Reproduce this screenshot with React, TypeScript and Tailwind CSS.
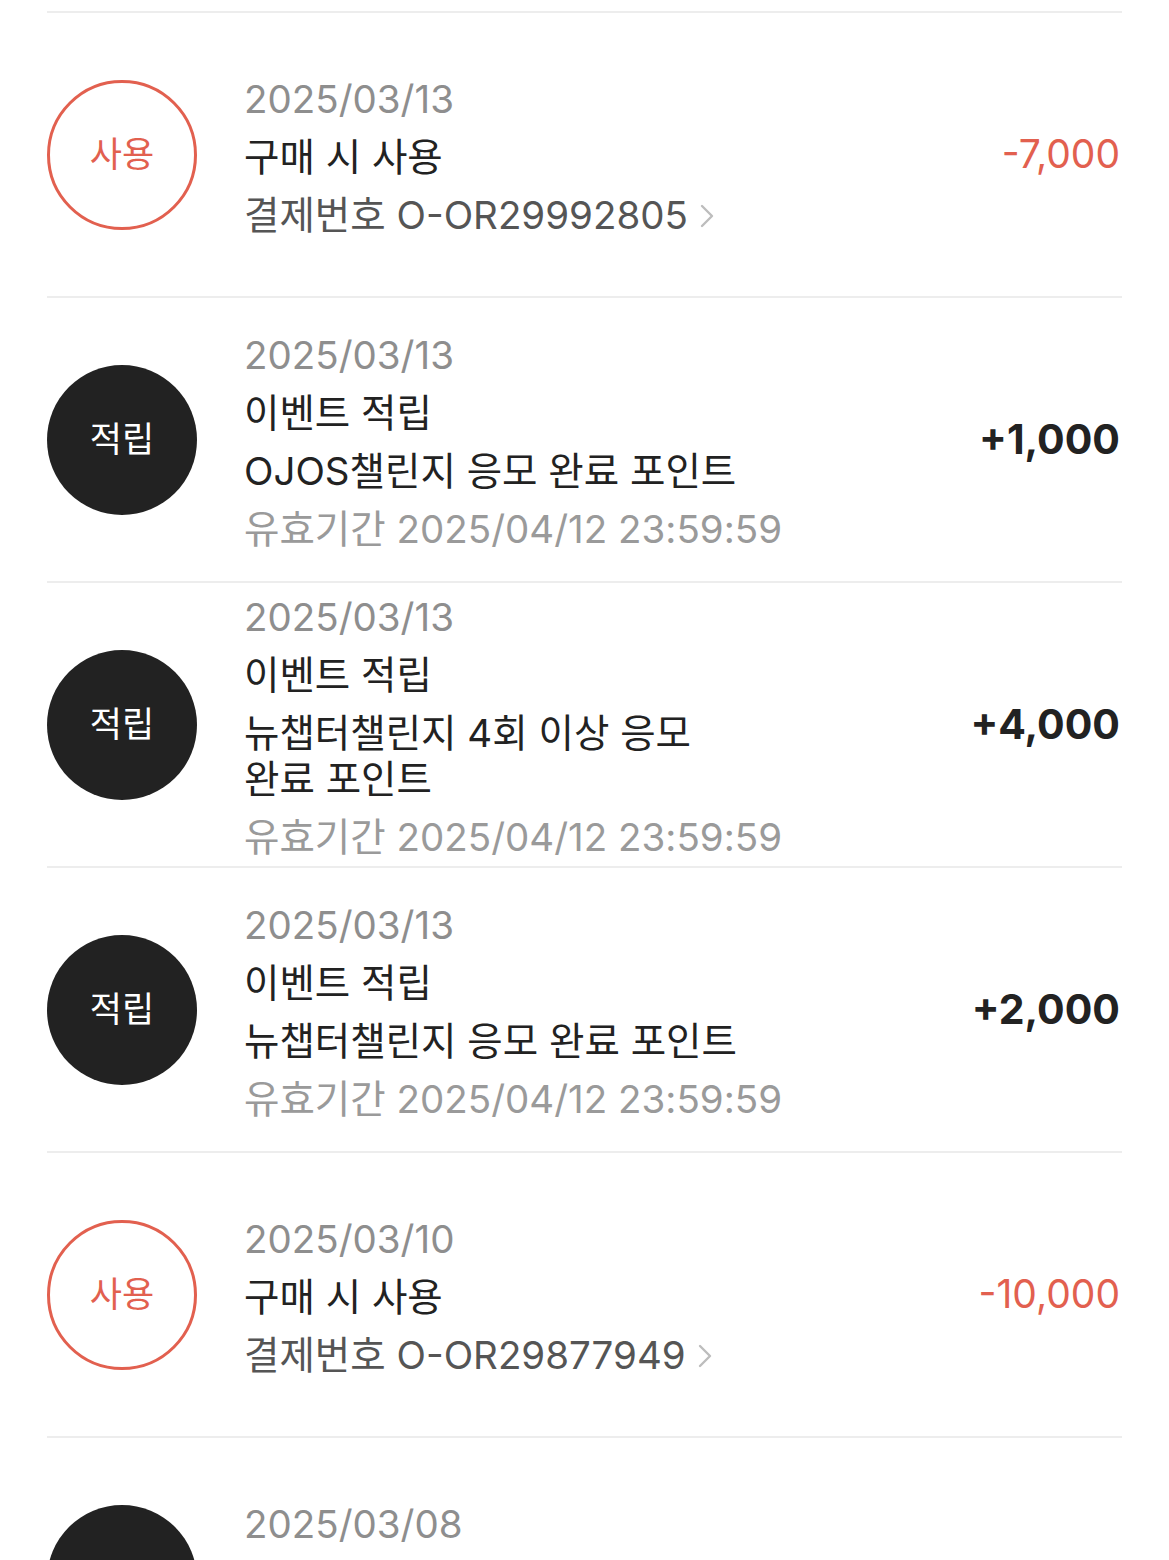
import React from 'react';

type Entry = {
  kind: 'use' | 'earn';
  date: string;
  title: string;
  lines: string[];
  order?: string;
  expiry?: string;
  amount: string;
};

const entries: Entry[] = [
  { kind: 'use', date: '2025/03/13', title: '구매 시 사용', lines: [], order: 'O-OR29992805', amount: '-7,000' },
  {
    kind: 'earn',
    date: '2025/03/13',
    title: '이벤트 적립',
    lines: ['OJOS챌린지 응모 완료 포인트'],
    expiry: '2025/04/12 23:59:59',
    amount: '+1,000',
  },
  {
    kind: 'earn',
    date: '2025/03/13',
    title: '이벤트 적립',
    lines: ['뉴챕터챌린지 4회 이상 응모', '완료 포인트'],
    expiry: '2025/04/12 23:59:59',
    amount: '+4,000',
  },
  {
    kind: 'earn',
    date: '2025/03/13',
    title: '이벤트 적립',
    lines: ['뉴챕터챌린지 응모 완료 포인트'],
    expiry: '2025/04/12 23:59:59',
    amount: '+2,000',
  },
  { kind: 'use', date: '2025/03/10', title: '구매 시 사용', lines: [], order: 'O-OR29877949', amount: '-10,000' },
  {
    kind: 'earn',
    date: '2025/03/08',
    title: '구매 적립',
    lines: [],
    order: 'O-OR29812044',
    amount: '+1,500',
  },
];

function Badge({ kind }: { kind: Entry['kind'] }) {
  if (kind === 'use') {
    return (
      <div className="w-[150px] h-[150px] shrink-0 rounded-full border-[3px] border-[#e2604f] flex items-center justify-center text-[35px] text-[#e2604f]">
        사용
      </div>
    );
  }
  return (
    <div className="w-[150px] h-[150px] shrink-0 rounded-full bg-[#222222] flex items-center justify-center text-[35px] text-white">
      적립
    </div>
  );
}

function Chevron() {
  return (
    <svg width="14" height="24" viewBox="0 0 14 24" className="ml-[12px] mt-[2px]">
      <polyline points="2,2 12,12 2,22" fill="none" stroke="#bdbdbd" strokeWidth="2.4" strokeLinecap="round" strokeLinejoin="round" />
    </svg>
  );
}

function Row({ e }: { e: Entry }) {
  return (
    <div className="h-[283px] border-t-2 border-[#ededed] box-content flex items-center">
      <Badge kind={e.kind} />
      <div className="ml-[47px] mt-[4px] flex-1 flex flex-col gap-[12px] text-[38.5px] leading-[46px]">
        <div className="text-[#8e8e8e]">{e.date}</div>
        <div className="text-[#222222]">{e.title}</div>
        {e.lines.length > 0 && (
          <div className="text-[#222222]">
            {e.lines.map((l) => (
              <div key={l}>{l}</div>
            ))}
          </div>
        )}
        {e.order && (
          <div className="flex items-center text-[#555555]">
            <span>결제번호 {e.order}</span>
            <Chevron />
          </div>
        )}
        {e.expiry && <div className="text-[#9a9a9a] whitespace-nowrap">유효기간 {e.expiry}</div>}
      </div>
      <div
        className={
          e.kind === 'use'
            ? 'text-[39px] text-[#e2604f] pr-[2px]'
            : 'text-[41px] font-bold text-[#222222] pr-[2px]'
        }
      >
        {e.amount}
      </div>
    </div>
  );
}

export default function App() {
  return (
    <div
      className="w-[1169px] h-[1560px] overflow-hidden bg-white px-[47px] pt-[11px]"
      style={{ fontFamily: 'Inter, "Noto Sans CJK KR", sans-serif' }}
    >
      {entries.map((e, i) => (
        <Row key={i} e={e} />
      ))}
    </div>
  );
}
